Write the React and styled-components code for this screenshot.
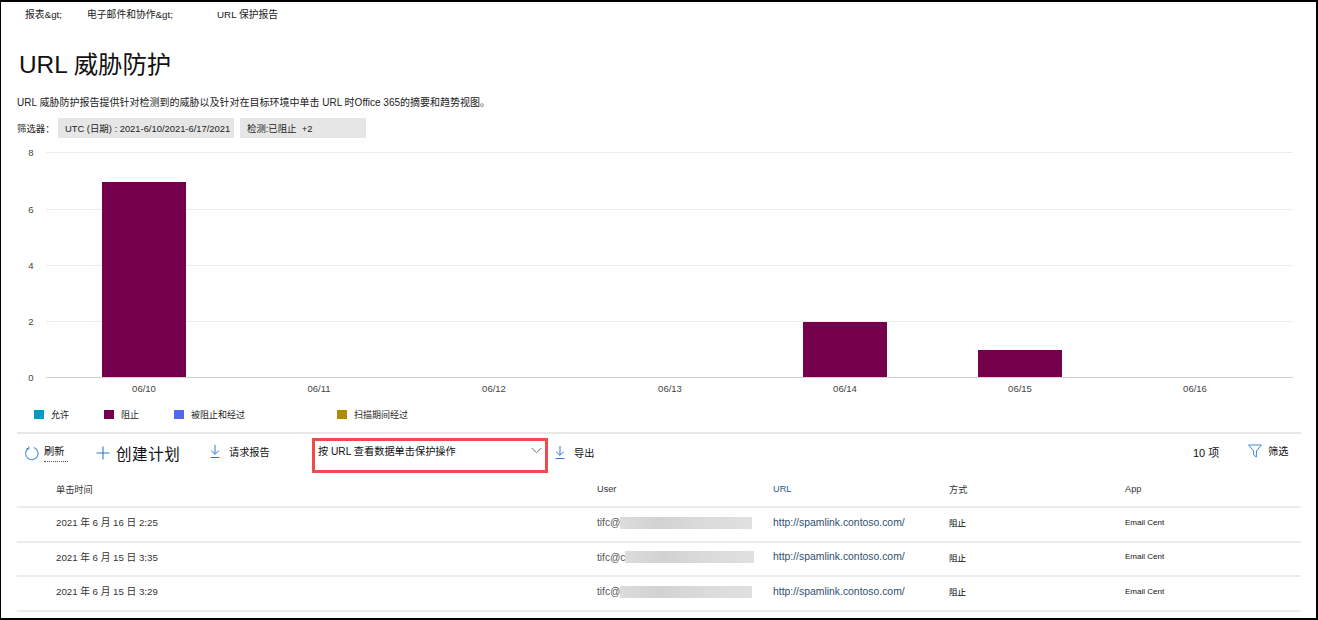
import React from 'react';
import styled, { createGlobalStyle } from 'styled-components';

const GlobalStyle = createGlobalStyle`
  html, body {
    margin: 0;
    padding: 0;
    background: #ffffff;
  }
  body {
    font-family: "Liberation Sans", "Noto Sans CJK SC", sans-serif;
    color: #1a1a1a;
  }
`;

const Frame = styled.div`
  box-sizing: border-box;
  width: 1318px;
  height: 620px;
  border: 1px solid #000;
  border-top-width: 2px;
  border-bottom-width: 2px;
  border-right-width: 2px;
  overflow: hidden;
  background: #fff;
`;

const Breadcrumb = styled.div`
  display: flex;
  height: 24px;
  padding-left: 24px;
  align-items: center;
  font-size: 9.8px;
`;

const Crumb = styled.span`
  width: ${(p) => p.$width}px;
`;

const Title = styled.h1`
  margin: 21px 0 0 18px;
  height: 36px;
  font-size: 24.4px;
  line-height: 36px;
  font-weight: 400;
  color: #111;
`;

const Intro = styled.p`
  margin: 13px 0 0 16px;
  height: 14px;
  font-size: 10px;
  line-height: 14px;
  color: #222;
`;

const FilterRow = styled.div`
  display: flex;
  align-items: center;
  margin: 8px 0 0 16px;
  height: 20px;
  font-size: 9.4px;
  color: #222;
`;

const FilterLabel = styled.span`
  width: 41px;
`;

const Pill = styled.span`
  box-sizing: border-box;
  display: flex;
  align-items: center;
  width: ${(p) => p.$width}px;
  height: 20px;
  margin-right: 6px;
  padding-left: ${(p) => p.$pad}px;
  background: #e6e6e6;
  white-space: pre;
`;

const ChartBox = styled.div`
  height: 256px;
  margin-top: 9px;
`;

const Legend = styled.div`
  display: flex;
  align-items: center;
  height: 22px;
  padding-left: 33px;
  font-size: 9px;
  color: #222;
`;

const LegendItem = styled.div`
  display: flex;
  align-items: center;
  gap: 7px;
  width: ${(p) => p.$width}px;
`;

const Swatch = styled.span`
  width: 10px;
  height: 9px;
  background: ${(p) => p.$color};
`;

const Divider = styled.div`
  height: 2px;
  margin: 7px 15px 0 16px;
  background: #e8e8e8;
`;

const Toolbar = styled.div`
  display: flex;
  align-items: center;
  height: 39px;
  margin-left: 23px;
  margin-right: 27px;
  font-size: 10.2px;
  color: #111;
`;

const ToolButton = styled.div`
  display: flex;
  align-items: center;
  flex: none;
  width: ${(p) => p.$width}px;
  gap: ${(p) => p.$gap || 5}px;
  padding-bottom: ${(p) => p.$lift || 0}px;
`;

const PlanLabel = styled.span`
  font-size: 15.5px;
  letter-spacing: 0.6px;
  color: #111;
`;

const RefreshLabel = styled.span`
  margin-top: -3px;
  border-bottom: 1px dotted #555;
  padding-bottom: 3px;
  padding-right: 4px;
`;

const ViewSelect = styled.div`
  box-sizing: border-box;
  display: flex;
  align-items: center;
  justify-content: space-between;
  flex: none;
  width: 236px;
  height: 35px;
  margin: 3px 7px 0 0;
  padding: 0 3px 9px 3px;
  border: 3px solid #f04a4a;
  font-size: 10.2px;
  white-space: nowrap;
`;

const Spacer = styled.div`
  flex: 1;
`;

const Count = styled.span`
  flex: none;
  width: 55px;
  font-size: 11px;
  padding-bottom: 4px;
`;

const Table = styled.div`
  margin: 0 15px 0 16px;
`;

const Row = styled.div`
  display: grid;
  grid-template-columns: 541px 176px 176px 176px 1fr;
  align-items: center;
  box-sizing: border-box;
  height: ${(p) => p.$height}px;
  padding-left: 39px;
  border-bottom: 2px solid #ececec;
  font-size: 9.5px;
  color: #333;
`;

const HeadCell = styled.span`
  font-size: 9.2px;
  color: ${(p) => p.$color || '#333'};
  padding-bottom: 2px;
`;

const Cell = styled.span`
  font-size: ${(p) => p.$size || 9.7}px;
  color: ${(p) => p.$color || '#333'};
  padding-bottom: 4px;
  white-space: nowrap;
`;

const UserCell = styled.span`
  display: flex;
  align-items: center;
  font-size: 10.2px;
  color: #555;
  padding-bottom: 3px;
`;

const Blurred = styled.span`
  display: block;
  width: ${(p) => p.$width}px;
  height: 12px;
  background: linear-gradient(90deg, #dcdcdc 0%, #d2d2d2 30%, #dadada 60%, #e0e0e0 100%);
`;

const BLUE = '#2b7cd3';

const RefreshIcon = () => (
  <svg width="15" height="15" viewBox="0 0 15 15" fill="none" stroke="#4a8fd6" strokeWidth="1.1">
    <path d="M4.6 2.2 A6.2 6.2 0 1 0 9.8 1.6" />
    <path d="M4.8 0.4 V2.6 H2.4" />
  </svg>
);

const PlusIcon = () => (
  <svg width="14" height="14" viewBox="0 0 14 14" stroke={BLUE} strokeWidth="1.1">
    <path d="M7 0.5 V13.5 M0.5 7 H13.5" />
  </svg>
);

const DownloadIcon = () => (
  <svg width="10" height="13" viewBox="0 0 10 13" fill="none" stroke={BLUE} strokeWidth="1">
    <path d="M5 0 V9 M1.2 5.6 L5 9.4 L8.8 5.6 M0.5 12.5 H9.5" />
  </svg>
);

const FunnelIcon = () => (
  <svg width="14" height="14" viewBox="0 0 14 14" fill="none" stroke="#3f8ad8" strokeWidth="1">
    <path d="M0.6 1 H13.4 L8.4 7 V13 L5.6 11 V7 Z" />
  </svg>
);

const ChevronIcon = () => (
  <svg width="11" height="7" viewBox="0 0 11 7" fill="none" stroke="#6a6a6a" strokeWidth="1">
    <path d="M0.5 0.8 L5.5 5.8 L10.5 0.8" />
  </svg>
);

const gridValues = [
  { label: '8', y: 5 },
  { label: '6', y: 62 },
  { label: '4', y: 118 },
  { label: '2', y: 174 },
  { label: '0', y: 230 },
];

const bars = [
  { x: 101, top: 35 },
  { x: 802, top: 175 },
  { x: 977, top: 203 },
];

const days = [
  { label: '06/10', x: 143 },
  { label: '06/11', x: 318 },
  { label: '06/12', x: 493 },
  { label: '06/13', x: 669 },
  { label: '06/14', x: 844 },
  { label: '06/15', x: 1019 },
  { label: '06/16', x: 1194 },
];

const Chart = () => (
  <svg width="1315" height="256" viewBox="0 0 1315 256" fontFamily="Liberation Sans, sans-serif" fontSize="9.5" fill="#444">
    {gridValues.map((g) => (
      <g key={g.label}>
        <line x1="45" x2="1292" y1={g.y + 0.5} y2={g.y + 0.5} stroke={g.label === '0' ? '#d0d0d0' : '#ececec'} />
        <text x="30" y={g.y + 3.5} textAnchor="middle">{g.label}</text>
      </g>
    ))}
    {bars.map((b) => (
      <rect key={b.x} x={b.x} y={b.top} width="84" height={230 - b.top} fill="#75004c" />
    ))}
    {days.map((d) => (
      <text key={d.label} x={d.x} y="244.5" textAnchor="middle">{d.label}</text>
    ))}
  </svg>
);

const rows = [
  { time: '2021 年 6 月 16 日 2:25', mail: 'tifc@', blur: 132 },
  { time: '2021 年 6 月 15 日 3:35', mail: 'tifc@c', blur: 129 },
  { time: '2021 年 6 月 15 日 3:29', mail: 'tifc@', blur: 132 },
];

export default function App() {
  return (
    <>
      <GlobalStyle />
      <Frame>
        <Breadcrumb>
          <Crumb $width={62}>报表&amp;gt;</Crumb>
          <Crumb $width={130}>电子邮件和协作&amp;gt;</Crumb>
          <Crumb>URL 保护报告</Crumb>
        </Breadcrumb>
        <Title>URL 威胁防护</Title>
        <Intro>URL 威胁防护报告提供针对检测到的威胁以及针对在目标环境中单击 URL 时Office 365的摘要和趋势视图。</Intro>
        <FilterRow>
          <FilterLabel>筛选器：</FilterLabel>
          <Pill $width={176} $pad={7}>UTC (日期) : 2021-6/10/2021-6/17/2021</Pill>
          <Pill $width={126} $pad={7}>检测:已阻止  +2</Pill>
        </FilterRow>
        <ChartBox>
          <Chart />
        </ChartBox>
        <Legend>
          <LegendItem $width={70}><Swatch $color="#009cbd" />允许</LegendItem>
          <LegendItem $width={70}><Swatch $color="#75004c" />阻止</LegendItem>
          <LegendItem $width={163}><Swatch $color="#5566ee" />被阻止和经过</LegendItem>
          <LegendItem $width={120}><Swatch $color="#ae8c00" />扫描期间经过</LegendItem>
        </Legend>
        <Divider />
        <Toolbar>
          <ToolButton $width={72}><RefreshIcon /><RefreshLabel>刷新</RefreshLabel></ToolButton>
          <ToolButton $width={114} $gap={6} $lift={2}><PlusIcon /><PlanLabel>创建计划</PlanLabel></ToolButton>
          <ToolButton $width={102} $gap={9} $lift={4}><DownloadIcon />请求报告</ToolButton>
          <ViewSelect>按 URL 查看数据单击保护操作<ChevronIcon /></ViewSelect>
          <ToolButton $width={60} $gap={9} $lift={3}><DownloadIcon />导出</ToolButton>
          <Spacer />
          <Count>10 项</Count>
          <ToolButton $width={41} $gap={6} $lift={6}><FunnelIcon />筛选</ToolButton>
        </Toolbar>
        <Table>
          <Row $height={35}>
            <HeadCell>单击时间</HeadCell>
            <HeadCell>User</HeadCell>
            <HeadCell $color="#2f5c8a">URL</HeadCell>
            <HeadCell>方式</HeadCell>
            <HeadCell>App</HeadCell>
          </Row>
          {rows.map((row) => (
            <Row key={row.time} $height={34.6}>
              <Cell>{row.time}</Cell>
              <UserCell>{row.mail}<Blurred $width={row.blur} /></UserCell>
              <Cell $size={10.4} $color="#2f4f6f">http://spamlink.contoso.com/</Cell>
              <Cell $size={8.5} $color="#000">阻止</Cell>
              <Cell $size={8} $color="#111">Email Cent</Cell>
            </Row>
          ))}
        </Table>
      </Frame>
    </>
  );
}
